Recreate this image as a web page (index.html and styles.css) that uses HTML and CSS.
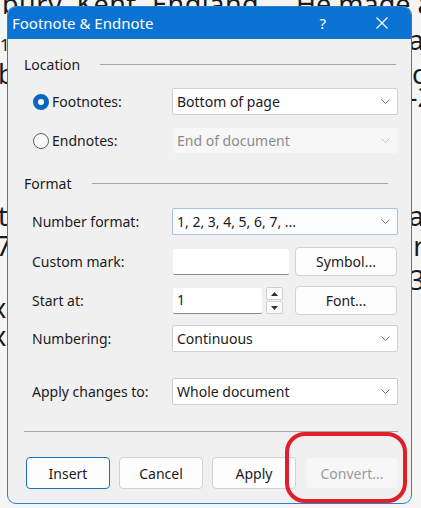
FILE: index.html
```html
<!DOCTYPE html>
<html>
<head>
<meta charset="utf-8">
<link rel="stylesheet" href="styles.css">
</head>
<body>
<div class="doc">
  <div class="line l0"><span>bury, Kent, England.</span><span>He made a w</span></div>
  <div class="line l1"><span class="sup">1</span><span>a</span></div>
  <div class="line l2"><span>b</span><span>c</span></div>
  <div class="line l3"><span></span><span>-2</span></div>
  <div class="dots"></div>
  <div class="line l4"><span>t</span><span>a</span></div>
  <div class="line l5"><span>7</span><span>re</span></div>
  <div class="line l6"><span></span><span>3</span></div>
  <div class="line l7"><span>x</span><span></span></div>
  <div class="line l8"><span>x</span><span></span></div>
</div>

<div class="dialog">
  <div class="titlebar">
    <span class="title">Footnote &amp; Endnote</span>
    <span class="help">?</span>
    <svg class="close" width="12" height="12" viewBox="0 0 12 12"><path d="M0.5 0.5 L11.5 11.5 M11.5 0.5 L0.5 11.5" stroke="#fff" stroke-width="1.2" fill="none"/></svg>
  </div>
  <div class="body">
    <div class="section"><span>Location</span><div class="rule"></div></div>
    <div class="rows loc">
      <div class="row">
        <label class="radio-label"><span class="radio on"></span>Footnotes:</label>
        <div class="select"><span>Bottom of page</span><svg class="chev" width="9" height="5" viewBox="0 0 9 5"><path d="M0.5 0.5 L4.5 4.5 L8.5 0.5" stroke="#707070" fill="none"/></svg></div>
      </div>
      <div class="row">
        <label class="radio-label"><span class="radio"></span>Endnotes:</label>
        <div class="select disabled"><span>End of document</span><svg class="chev" width="9" height="5" viewBox="0 0 9 5"><path d="M0.5 0.5 L4.5 4.5 L8.5 0.5" stroke="#c4c4c4" fill="none"/></svg></div>
      </div>
    </div>
    <div class="section fmt"><span>Format</span><div class="rule"></div></div>
    <div class="rows">
      <div class="row">
        <label>Number format:</label>
        <div class="select hover"><span>1, 2, 3, 4, 5, 6, 7, ...</span><svg class="chev" width="9" height="5" viewBox="0 0 9 5"><path d="M0.5 0.5 L4.5 4.5 L8.5 0.5" stroke="#707070" fill="none"/></svg></div>
      </div>
      <div class="row">
        <label>Custom mark:</label>
        <div class="split">
          <div class="textbox wide"></div>
          <button class="btn side">Symbol...</button>
        </div>
      </div>
      <div class="row">
        <label>Start at:</label>
        <div class="split">
          <div class="numgroup">
            <div class="textbox narrow">1</div>
            <div class="spin">
              <div class="spinbtn"><svg width="7" height="4" viewBox="0 0 7 4"><path d="M0 4 L3.5 0 L7 4 Z" fill="#333"/></svg></div>
              <div class="spinbtn"><svg width="7" height="4" viewBox="0 0 7 4"><path d="M0 0 L3.5 4 L7 0 Z" fill="#333"/></svg></div>
            </div>
          </div>
          <button class="btn side">Font...</button>
        </div>
      </div>
      <div class="row">
        <label>Numbering:</label>
        <div class="select"><span>Continuous</span><svg class="chev" width="9" height="5" viewBox="0 0 9 5"><path d="M0.5 0.5 L4.5 4.5 L8.5 0.5" stroke="#707070" fill="none"/></svg></div>
      </div>
      <div class="row apply">
        <label>Apply changes to:</label>
        <div class="select"><span>Whole document</span><svg class="chev" width="9" height="5" viewBox="0 0 9 5"><path d="M0.5 0.5 L4.5 4.5 L8.5 0.5" stroke="#707070" fill="none"/></svg></div>
      </div>
    </div>
    <div class="sep"></div>
    <div class="buttons">
      <button class="btn default">Insert</button>
      <button class="btn">Cancel</button>
      <button class="btn">Apply</button>
      <button class="btn dis">Convert...</button>
    </div>
  </div>
</div>
<div class="mark"></div>
</body>
</html>
```
FILE: styles.css
```css
* { box-sizing: border-box; }
html, body { margin: 0; padding: 0; }
body {
  width: 421px;
  height: 508px;
  overflow: hidden;
  position: relative;
  background: #f5f5f5;
  font-family: "Noto Sans", "Open Sans", sans-serif;
}
.doc {
  font-family: "Noto Sans", sans-serif;
  font-size: 27px;
  color: #1a1a1a;
  overflow: hidden;
  height: 508px;
}
.line {
  display: flex;
  justify-content: space-between;
  align-items: flex-start;
  height: 30px;
  line-height: 30px;
  white-space: nowrap;
}
.line.l0 { margin-top: -11px; margin-left: 2px; margin-right: -40px; }
.line.l0 span:first-child { letter-spacing: 0.5px; }
.line.l1 { height: 24px; margin-right: -3px; }
.line.l1 .sup { font-size: 17px; line-height: 24px; margin-top: 14px; }
.line.l1 span:last-child { margin-top: 6px; }
.line.l2 { margin-top: 16px; margin-left: -2px; margin-right: -4px; }
.line.l3 { margin-top: -2px; margin-right: -12px; height: 20px; line-height: 20px; }
.dots { height: 94px; }
.line.l4 { margin-right: -3px; margin-left: -2px; }
.line.l5 { margin-right: -18px; margin-left: -4px; }
.line.l6 { height: 10px; line-height: 10px; margin-top: 14px; margin-right: -4px; }
.line.l7 { margin-top: 8px; margin-left: -8px; }
.line.l8 { margin-top: -2px; margin-left: -8px; }

.dialog {
  position: absolute;
  left: 7px;
  top: 6px;
  width: 405px;
  height: 498px;
  border: 1px solid #2f7fd0;
  border-radius: 9px;
  background: #f0f0f0;
  overflow: hidden;
  display: flex;
  flex-direction: column;
  color: #1b1b1b;
  font-size: 14px;
}
.titlebar {
  height: 32px;
  background: #0a72d2;
  color: #fff;
  display: flex;
  align-items: center;
  padding: 0 0 0 4px;
  flex-shrink: 0;
}
.title { font-size: 15px; flex: 1; }
.help { font-size: 15px; margin-right: 50px; }
.close { margin-right: 23px; }

.body {
  flex: 1;
  padding: 0 13px 0 16px;
  display: flex;
  flex-direction: column;
}
.section {
  display: flex;
  align-items: center;
  margin-top: 15px;
  height: 20px;
}
.section .rule {
  flex: 1;
  height: 1px;
  background: #a6a6a6;
  margin-left: 20px;
  margin-right: 2px;
}
.section.fmt { margin-top: 19px; }
.section.fmt .rule { margin-right: 10px; }
.rows {
  display: flex;
  flex-direction: column;
  gap: 12px;
  margin-top: 15px;
  padding-left: 8px;
}
.rows.loc { margin-top: 14px; }
.row {
  display: grid;
  grid-template-columns: 140px 1fr;
  align-items: center;
  height: 27px;
}
.row.apply { margin-top: 14px; }
.row label { display: flex; align-items: center; }
.radio-label { margin-left: 1px; }
.radio {
  width: 16px;
  height: 16px;
  border-radius: 50%;
  border: 1px solid #606060;
  background: #fafafa;
  margin-right: 3px;
  flex-shrink: 0;
}
.radio.on {
  border: 5px solid #0a67c0;
  background: #fff;
}
.select {
  height: 27px;
  background: #fff;
  border: 1px solid #cfcfcf;
  border-radius: 2px;
  display: flex;
  align-items: center;
  justify-content: space-between;
  padding: 0 7px 0 4px;
}
.select.disabled { background: #f7f7f7; border-color: #f0f0f0; color: #8c8c8c; }
.select.hover { border-color: #a9c2dc; background: #fcfdff; }
.split {
  display: flex;
  justify-content: space-between;
  align-items: center;
}
.textbox {
  height: 26px;
  background: #fff;
  border-bottom: 1px solid #8a8a8a;
  border-radius: 2px;
  padding: 0 4px;
  line-height: 24px;
}
.textbox.wide { width: 116px; margin-left: 1px; }
.textbox.narrow { width: 89px; margin-left: 1px; }
.numgroup { display: flex; align-items: center; gap: 4px; }
.spin { display: flex; flex-direction: column; gap: 1px; }
.spinbtn {
  width: 17px;
  height: 13px;
  border: 1px solid #d0d0d0;
  border-radius: 2px;
  background: #fbfbfb;
  display: flex;
  align-items: center;
  justify-content: center;
}
.btn {
  font-family: inherit;
  font-size: 14px;
  color: #1b1b1b;
  height: 29px;
  background: #fdfdfd;
  border: 1px solid #d2d2d2;
  border-radius: 4px;
  padding: 0;
}
.btn.side { width: 102px; margin-right: 1px; }
.sep {
  height: 1px;
  background: #a6a6a6;
  margin-top: 26px;
}
.buttons {
  display: flex;
  gap: 9px;
  margin-top: 25px;
  padding-left: 2px;
}
.buttons .btn { width: 84px; height: 32px; }
.btn.default { border-color: #1d6fbf; }
.btn.dis { width: 92px; margin-left: 1px; background: #f7f7f7; border-color: #f1f1f1; color: #9a9a9a; }

.mark {
  position: absolute;
  left: 285px;
  top: 432px;
  width: 122px;
  height: 71px;
  border: 4px solid #e01f2a;
  border-radius: 20px;
}
```
